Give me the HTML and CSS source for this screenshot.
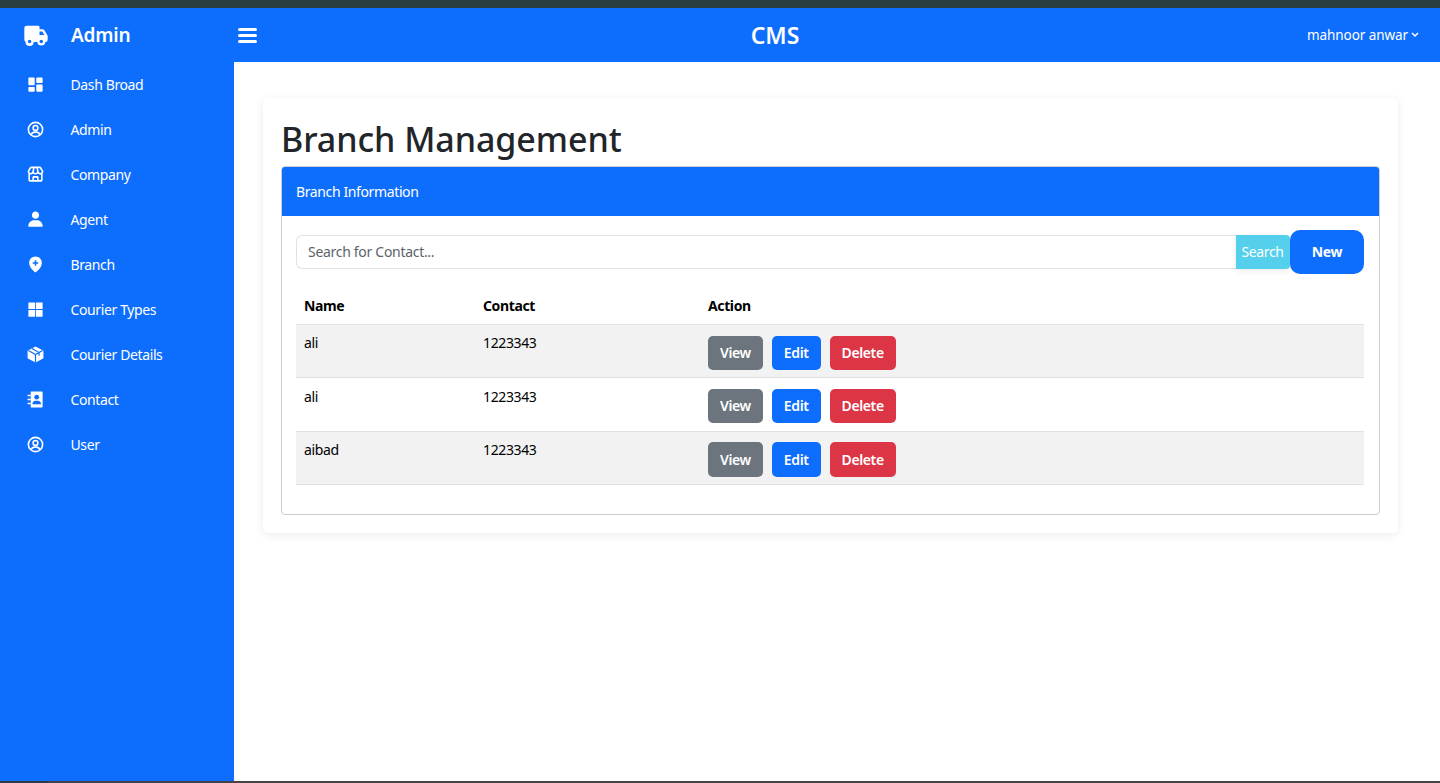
FILE: index.html
```html
<!DOCTYPE html>
<html lang="en">
<head>
    <meta charset="UTF-8">
    <meta name="viewport" content="width=device-width, initial-scale=1.0">
    <title>Branch Management</title>
    <link rel="stylesheet" href="styles.css">
</head>
<body>
    <div class="top-strip"></div>

    <div class="app">
        <aside class="sidebar">
            <div class="brand">
                <svg class="brand-icon" viewBox="0 0 24 24" fill="#fff"><path d="M19.150 8a2 2 0 0 0-1.720-1H15V5a1 1 0 0 0-1-1H4a2 2 0 0 0-2 2v10a2 2 0 0 0 1 1.730 3.490 3.490 0 0 0 7 .27h3.100a3.480 3.480 0 0 0 6.900 0 2 2 0 0 0 2-2v-3a1.070 1.070 0 0 0-.14-.52zM15 9h2.430l1.800 3H15zM6.500 19A1.500 1.500 0 1 1 8 17.500 1.500 1.500 0 0 1 6.500 19zm10 0a1.500 1.500 0 1 1 1.500-1.500 1.500 1.500 0 0 1-1.500 1.500z"/></svg>
                <span class="brand-name">Admin</span>
            </div>
            <nav class="side-nav">
                <a class="side-link" href="#">
                    <svg class="side-icon" viewBox="0 0 24 24" fill="#fff"><path d="M4 13h6a1 1 0 0 0 1-1V4a1 1 0 0 0-1-1H4a1 1 0 0 0-1 1v8a1 1 0 0 0 1 1zm-1 7a1 1 0 0 0 1 1h6a1 1 0 0 0 1-1v-4a1 1 0 0 0-1-1H4a1 1 0 0 0-1 1v4zm10 0a1 1 0 0 0 1 1h6a1 1 0 0 0 1-1v-7a1 1 0 0 0-1-1h-6a1 1 0 0 0-1 1v7zm1-10h6a1 1 0 0 0 1-1V4a1 1 0 0 0-1-1h-6a1 1 0 0 0-1 1v5a1 1 0 0 0 1 1z"/></svg>
                    Dash Broad
                </a>
                <a class="side-link" href="#">
                    <svg class="side-icon" viewBox="0 0 24 24" fill="none" stroke="#fff" stroke-width="2"><circle cx="12" cy="12" r="9"/><circle cx="12" cy="10" r="3"/><path d="M6.500 18.500c.8-2 2.600-3.200 4.500-3.200h2c1.900 0 3.700 1.200 4.500 3.200"/></svg>
                    Admin
                </a>
                <a class="side-link" href="#">
                    <svg class="side-icon" viewBox="0 0 24 24" fill="#fff"><path d="M19.148 2.971A2.008 2.008 0 0 0 17.434 2H6.566c-.698 0-1.355.372-1.714.971L2.143 7.485A.995.995 0 0 0 2 8a3.970 3.970 0 0 0 1 2.618V19c0 1.103.897 2 2 2h14c1.103 0 2-.897 2-2v-8.382A3.970 3.970 0 0 0 22 8a.995.995 0 0 0-.143-.515l-2.709-4.514zm.836 5.276A2 2 0 0 1 18 10c-1.103 0-2-.897-2-2 0-.068-.025-.128-.039-.192l.020-.004L15.220 4h2.214l2.550 4.247zM10.819 4h2.361l.813 4.065C13.958 9.137 13.080 10 12 10s-1.958-.863-1.993-1.935L10.819 4zM6.566 4H8.780l-.761 3.804.020.004C8.025 7.872 8 7.932 8 8c0 1.103-.897 2-2 2a2 2 0 0 1-1.984-1.753L6.566 4zM10 19v-3h4v3h-4zm6 0v-3c0-1.103-.897-2-2-2h-4c-1.103 0-2 .897-2 2v3H5v-7.142c.321.083.652.142 1 .142a3.980 3.980 0 0 0 3-1.382A3.980 3.980 0 0 0 12 12a3.980 3.980 0 0 0 3-1.382A3.980 3.980 0 0 0 18 12c.348 0 .679-.059 1-.142V19h-3z"/></svg>
                    Company
                </a>
                <a class="side-link" href="#">
                    <svg class="side-icon" viewBox="0 0 24 24" fill="#fff"><path d="M7.500 6.500C7.500 8.981 9.519 11 12 11s4.500-2.019 4.500-4.500S14.481 2 12 2 7.500 4.019 7.500 6.500zM20 21h1v-1c0-3.859-3.141-7-7-7h-4c-3.860 0-7 3.141-7 7v1h17z"/></svg>
                    Agent
                </a>
                <a class="side-link" href="#">
                    <svg class="side-icon" viewBox="0 0 24 24"><path fill="#fff" d="M12 2C7.589 2 4 5.589 4 9.995 3.971 16.440 11.696 21.784 12 22c0 0 8.029-5.560 8-12 0-4.411-3.589-8-8-8z"/><path stroke="#0d6efd" stroke-width="2" d="M12 6.500v7M8.500 10h7"/></svg>
                    Branch
                </a>
                <a class="side-link" href="#">
                    <svg class="side-icon" viewBox="0 0 24 24" fill="#fff"><rect x="3" y="3" width="8.500" height="8.500" rx=".6"/><rect x="12.500" y="3" width="8.500" height="8.500" rx=".6"/><rect x="3" y="12.500" width="8.500" height="8.500" rx=".6"/><rect x="12.500" y="12.500" width="8.500" height="8.500" rx=".6"/></svg>
                    Courier Types
                </a>
                <a class="side-link" href="#">
                    <svg class="side-icon" viewBox="0 0 24 24"><path fill="#fff" d="M12 2 21 6.500a1 1 0 0 1 1 1v9a1 1 0 0 1-1 1L12 22l-9-4.500a1 1 0 0 1-1-1v-9a1 1 0 0 1 1-1z"/><path fill="none" stroke="#0d6efd" stroke-width="1.500" d="M3 7l9 5 9-5M12 12v10M7.500 4.500l9 5v4"/></svg>
                    Courier Details
                </a>
                <a class="side-link" href="#">
                    <svg class="side-icon" viewBox="0 0 24 24"><path fill="#fff" d="M6 2h14a1 1 0 0 1 1 1v18a1 1 0 0 1-1 1H6z"/><path stroke="#fff" stroke-width="2" d="M2 7h4M2 12h4M2 17h4"/><circle cx="13.500" cy="9" r="3" fill="#0d6efd"/><path fill="#0d6efd" d="M8 18c0-3 2-4.500 4-4.500h3c2 0 4 1.500 4 4.500z"/></svg>
                    Contact
                </a>
                <a class="side-link" href="#">
                    <svg class="side-icon" viewBox="0 0 24 24" fill="none" stroke="#fff" stroke-width="2"><circle cx="12" cy="12" r="9"/><circle cx="12" cy="10" r="3"/><path d="M6.500 18.500c.8-2 2.600-3.200 4.500-3.200h2c1.900 0 3.700 1.200 4.500 3.200"/></svg>
                    User
                </a>
            </nav>
        </aside>

        <div class="main">
            <header class="topbar">
                <svg class="menu-icon" viewBox="0 0 19 15" fill="#fff"><rect width="19" height="3" rx="1.500"/><rect y="6" width="19" height="3" rx="1.500"/><rect y="12" width="19" height="3" rx="1.500"/></svg>
                <div class="topbar-title">CMS</div>
                <div class="user-menu">
                    mahnoor anwar
                    <svg class="chevron" viewBox="0 0 8 6" fill="none" stroke="#fff" stroke-width="1.500"><path d="M1 1l3 3 3-3"/></svg>
                </div>
            </header>

            <main class="content">
                <section class="panel">
                    <h1>Branch Management</h1>
                    <div class="card">
                        <div class="card-header">Branch Information</div>
                        <div class="card-body">
                            <form class="search-row">
                                <input class="search-input" type="text" placeholder="Search for Contact...">
                                <button class="search-btn" type="button">Search</button>
                                <button class="new-btn" type="button">New</button>
                            </form>
                            <table class="data-table">
                                <thead>
                                    <tr>
                                        <th class="col-name">Name</th>
                                        <th class="col-contact">Contact</th>
                                        <th>Action</th>
                                    </tr>
                                </thead>
                                <tbody>
                                    <tr>
                                        <td>ali</td>
                                        <td>1223343</td>
                                        <td class="actions"><div class="action-group"><a class="btn btn-grey">View</a><a class="btn btn-blue">Edit</a><a class="btn btn-red">Delete</a></div></td>
                                    </tr>
                                    <tr>
                                        <td>ali</td>
                                        <td>1223343</td>
                                        <td class="actions"><div class="action-group"><a class="btn btn-grey">View</a><a class="btn btn-blue">Edit</a><a class="btn btn-red">Delete</a></div></td>
                                    </tr>
                                    <tr>
                                        <td>aibad</td>
                                        <td>1223343</td>
                                        <td class="actions"><div class="action-group"><a class="btn btn-grey">View</a><a class="btn btn-blue">Edit</a><a class="btn btn-red">Delete</a></div></td>
                                    </tr>
                                </tbody>
                            </table>
                        </div>
                    </div>
                </section>
            </main>
        </div>
    </div>

    <div class="bottom-strip"></div>
</body>
</html>
```

FILE: styles.css
```css
* {
    box-sizing: border-box;
}

html, body {
    height: 100%;
}

body {
    margin: 0;
    display: flex;
    flex-direction: column;
    overflow: hidden;
    background: #fff;
    color: #212529;
    font-family: "Noto Sans", "Open Sans", sans-serif;
    font-size: 14px;
    letter-spacing: -0.38px;
    line-height: 1.5;
}

.top-strip {
    height: 8px;
    background: #2b3d3f;
}

.bottom-strip {
    height: 2px;
    background: linear-gradient(90deg, #2b3d3f 48px, #444 48px);
}

.app {
    flex: 1;
    display: flex;
    min-height: 0;
}

/* sidebar */
.sidebar {
    width: 234px;
    background: #0d6efd;
    color: #fff;
}

.brand {
    height: 54px;
    display: flex;
    align-items: center;
    padding-left: 22px;
    gap: 21px;
}

.brand-icon {
    width: 28px;
    height: 28px;
}

.brand-name {
    font-size: 19px;
    font-weight: 600;
    letter-spacing: -0.2px;
}

.side-nav {
    display: flex;
    flex-direction: column;
}

.side-link {
    height: 45px;
    display: flex;
    align-items: center;
    gap: 25.5px;
    padding-left: 26px;
    color: #fff;
    text-decoration: none;
}

.side-icon {
    width: 19px;
    height: 19px;
    flex: none;
}

/* top bar */
.main {
    flex: 1;
    display: flex;
    flex-direction: column;
    min-width: 0;
}

.topbar {
    height: 54px;
    display: flex;
    align-items: center;
    justify-content: space-between;
    padding: 0 21px 0 4px;
    background: #0d6efd;
    color: #fff;
}

.menu-icon {
    width: 19px;
    height: 15px;
}

.topbar-title {
    margin-left: -14px;
    font-size: 23px;
    font-weight: 600;
    letter-spacing: 0;
}

.user-menu {
    display: flex;
    align-items: center;
    gap: 3px;
    font-size: 13.5px;
    letter-spacing: -0.08px;
}

.chevron {
    width: 8px;
    height: 6px;
}

/* content */
.content {
    flex: 1;
    padding: 36px 42px 0 29px;
}

.panel {
    padding: 19px 18px 18px;
    border-radius: 5px;
    background: #fff;
    box-shadow: 0 2px 10px rgba(0, 0, 0, 0.08);
}

h1 {
    margin: 0;
    height: 49px;
    font-size: 34px;
    font-weight: 500;
    letter-spacing: -0.06px;
    line-height: 44px;
}

.card {
    border: 1px solid #ccc;
    border-radius: 4px;
    overflow: hidden;
}

.card-header {
    height: 49px;
    margin-left: -1px;
    padding: 0 15px;
    display: flex;
    align-items: center;
    background: #0d6efd;
    color: #fff;
}

.card-body {
    padding: 14px 15px 29px 14px;
}

.search-row {
    display: flex;
    align-items: center;
    margin-bottom: 15px;
}

.search-input {
    flex: 1;
    height: 34px;
    padding: 0 11px 2px;
    border: 1px solid #dee2e6;
    border-right: 0;
    border-radius: 6px 0 0 6px;
    font: inherit;
    letter-spacing: -0.3px;
    color: #212529;
    outline: none;
}

.search-input::placeholder {
    color: #5c636a;
}

.search-btn {
    width: 54px;
    height: 34px;
    padding: 0 1px 2px 0;
    border: none;
    border-radius: 0 4px 4px 0;
    background: #54d0ec;
    color: #fff;
    font: inherit;
    letter-spacing: inherit;
    box-shadow: 0 2px 6px rgba(0, 0, 0, 0.08);
}

.new-btn {
    width: 74px;
    height: 44px;
    padding: 0 0 2px;
    border: none;
    border-radius: 10px;
    background: #0d6efd;
    color: #fff;
    font: inherit;
    font-weight: 700;
    letter-spacing: inherit;
}

.data-table {
    width: 100%;
    border-collapse: collapse;
    color: #000;
}

.data-table th {
    height: 35px;
    padding: 0 8px 2px;
    border-bottom: 1px solid #dee2e6;
    text-align: left;
    font-weight: 700;
}

.data-table td {
    padding: 7px 8px 8px;
    border-bottom: 1px solid #dee2e6;
    vertical-align: top;
}

.data-table tbody tr:nth-child(odd) {
    background: #f2f2f2;
}

.data-table tbody tr:nth-child(2) td {
    padding-top: 8px;
}

.col-name {
    width: 179px;
}

.col-contact {
    width: 225px;
}

.data-table td.actions {
    padding: 11px 8px 7px;
}

.data-table tbody tr:nth-child(2) td.actions {
    padding: 11px 8px 8px;
}

.data-table tbody tr:nth-child(3) td.actions {
    padding-top: 10px;
}

.data-table tbody tr:nth-child(3) .btn {
    height: 35px;
}

.action-group {
    display: flex;
    gap: 9px;
}

.btn {
    height: 34px;
    display: flex;
    align-items: center;
    padding: 0 12px;
    border-radius: 5px;
    color: #fff;
    font-weight: 600;
}

.btn-grey {
    background: #6c757d;
}

.btn-blue {
    background: #0d6efd;
}

.btn-red {
    background: #dc3545;
}
```
